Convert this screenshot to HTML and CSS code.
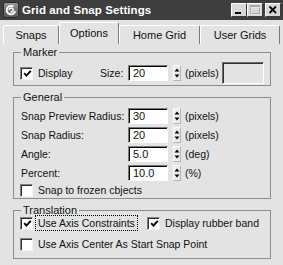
FILE: index.html
```html
<!DOCTYPE html>
<html>
<head>
<meta charset="utf-8">
<link rel="stylesheet" href="styles.css">
</head>
<body>
<div class="win">
  <div class="titlebar">
    <svg class="appicon" width="16" height="16" viewBox="0 0 16 16">
      <defs>
        <linearGradient id="ig" x1="0" y1="0" x2="0" y2="1">
          <stop offset="0" stop-color="#9a9a9a"/>
          <stop offset="1" stop-color="#555"/>
        </linearGradient>
      </defs>
      <rect x="0.5" y="0.5" width="15" height="15" rx="2" fill="url(#ig)" stroke="#2a2a2a"/>
      <path d="M10.5 4.6 A4.3 4.3 0 1 0 12.2 9.3" fill="none" stroke="#fff" stroke-width="1.8"/>
      <path d="M6.2 8.2 A2 2 0 1 1 9.6 9.4 L7.6 10.6" fill="none" stroke="#fff" stroke-width="1.5"/>
    </svg>
    <span class="title">Grid and Snap Settings</span>
    <div class="tbtns">
      <span class="tb"><svg width="14" height="12" viewBox="0 0 14 12"><rect x="3" y="8" width="6" height="2" fill="#000"/></svg></span>
      <span class="tb"><svg width="14" height="12" viewBox="0 0 14 12"><rect x="2.5" y="1.5" width="9" height="8" fill="none" stroke="#a8a8a8"/><line x1="2.5" y1="2.5" x2="11.5" y2="2.5" stroke="#a8a8a8"/><rect x="3.5" y="3.5" width="9" height="7" fill="none" stroke="#f2f2f2" stroke-width="0.6"/></svg></span>
      <span class="tb close"><svg width="14" height="12" viewBox="0 0 14 12"><path d="M3.5 2.5 L10 9 M10 2.5 L3.5 9" stroke="#000" stroke-width="1.8"/></svg></span>
    </div>
  </div>

  <div class="tabs">
    <div class="tab w-snaps">Snaps</div>
    <div class="tab sel w-options">Options</div>
    <div class="tab w-home">Home Grid</div>
    <div class="tab w-user">User Grids</div>
  </div>

  <div class="panel">
    <fieldset class="grp marker">
      <legend>Marker</legend>
      <div class="mrow">
        <label class="chk dispchk"><span class="box"><svg width="9" height="9" viewBox="0 0 9 9"><polyline points="1.2,4.2 3.4,6.6 7.8,1.8" fill="none" stroke="#000" stroke-width="1.9"/></svg></span>Display</label>
        <span class="sizelbl">Size:</span>
        <span class="num">20</span>
        <span class="spin"><svg width="8" height="16" viewBox="0 0 8 16"><polygon points="1.5,6.5 6.5,6.5 4,3.5" fill="#000"/><polygon points="1.5,9.5 6.5,9.5 4,12.5" fill="#000"/></svg></span>
        <span class="unit">(pixels)</span>
        <span class="swatch"></span>
      </div>
    </fieldset>

    <fieldset class="grp general">
      <legend>General</legend>
      <div class="frow">
        <span class="flabel">Snap Preview Radius:</span>
        <span class="num">30</span>
        <span class="spin"><svg width="8" height="16" viewBox="0 0 8 16"><polygon points="1.5,6.5 6.5,6.5 4,3.5" fill="#000"/><polygon points="1.5,9.5 6.5,9.5 4,12.5" fill="#000"/></svg></span>
        <span class="unit">(pixels)</span>
      </div>
      <div class="frow">
        <span class="flabel">Snap Radius:</span>
        <span class="num">20</span>
        <span class="spin"><svg width="8" height="16" viewBox="0 0 8 16"><polygon points="1.5,6.5 6.5,6.5 4,3.5" fill="#000"/><polygon points="1.5,9.5 6.5,9.5 4,12.5" fill="#000"/></svg></span>
        <span class="unit">(pixels)</span>
      </div>
      <div class="frow">
        <span class="flabel">Angle:</span>
        <span class="num">5.0</span>
        <span class="spin"><svg width="8" height="16" viewBox="0 0 8 16"><polygon points="1.5,6.5 6.5,6.5 4,3.5" fill="#000"/><polygon points="1.5,9.5 6.5,9.5 4,12.5" fill="#000"/></svg></span>
        <span class="unit">(deg)</span>
      </div>
      <div class="frow">
        <span class="flabel">Percent:</span>
        <span class="num">10.0</span>
        <span class="spin"><svg width="8" height="16" viewBox="0 0 8 16"><polygon points="1.5,6.5 6.5,6.5 4,3.5" fill="#000"/><polygon points="1.5,9.5 6.5,9.5 4,12.5" fill="#000"/></svg></span>
        <span class="unit">(%)</span>
      </div>
      <div class="crow">
        <label class="chk"><span class="box"></span>Snap to frozen cbjects</label>
      </div>
    </fieldset>

    <fieldset class="grp trans">
      <legend>Translation</legend>
      <div class="trow">
        <label class="chk axischk"><span class="box"><svg width="9" height="9" viewBox="0 0 9 9"><polyline points="1.2,4.2 3.4,6.6 7.8,1.8" fill="none" stroke="#000" stroke-width="1.9"/></svg></span><span class="focus">Use Axis Constraints</span></label>
        <label class="chk"><span class="box"><svg width="9" height="9" viewBox="0 0 9 9"><polyline points="1.2,4.2 3.4,6.6 7.8,1.8" fill="none" stroke="#000" stroke-width="1.9"/></svg></span>Display rubber band</label>
      </div>
      <div class="trow second">
        <label class="chk"><span class="box"></span>Use Axis Center As Start Snap Point</label>
      </div>
    </fieldset>
  </div>
</div>
</body>
</html>
```

FILE: styles.css
```css
html, body {
  margin: 0;
  padding: 0;
}
body {
  background: #e3e3e3;
  font-family: "Liberation Sans", Arial, sans-serif;
  font-size: 10.5px;
  color: #111;
}
.win {
  width: 283px;
  height: 265px;
  overflow: hidden;
}
.titlebar {
  height: 20px;
  background: #3e3e3e;
  display: flex;
  align-items: center;
  padding: 0 2px 0 3px;
  color: #fff;
}
.appicon {
  flex: none;
  margin-right: 3px;
}
.title {
  flex: 1;
  font-weight: bold;
  font-size: 11.5px;
  letter-spacing: 0.1px;
}
.tbtns {
  display: flex;
  align-items: center;
}
.tb {
  width: 16px;
  height: 14px;
  box-sizing: border-box;
  background: #d8d8d8;
  border: 1px solid;
  border-color: #fff #3a3a3a #3a3a3a #fff;
  display: flex;
  align-items: center;
  justify-content: center;
}
.tb.close {
  margin-left: 2px;
}

.tabs {
  height: 24px;
  display: flex;
  align-items: flex-end;
  padding-left: 3px;
}
.tab {
  height: 19px;
  box-sizing: border-box;
  border-top: 1px solid #fff;
  border-left: 1px solid #fff;
  border-right: 1px solid #7a7a7a;
  border-radius: 2px 2px 0 0;
  display: flex;
  align-items: center;
  justify-content: center;
  font-size: 11px;
}
.tab.sel {
  height: 22px;
  padding-bottom: 2px;
}
.w-snaps { width: 56px; }
.w-options { width: 60px; }
.w-home { width: 81px; }
.w-user { width: 80px; }

.panel {
  padding: 3px 0 0 13px;
}
.grp {
  margin: 0;
  width: 258px;
  box-sizing: border-box;
  border: 1px solid #8c8c8c;
  padding: 0 6px 0 6px;
}
.grp + .grp {
  margin-top: 6px;
}
legend {
  padding: 0 2px;
  margin-left: 1px;
  line-height: 11px;
  font-size: 11px;
}
.marker {
  padding-top: 4px;
  padding-bottom: 1px;
}
.mrow {
  display: flex;
  align-items: center;
  height: 22px;
}
.chk {
  display: flex;
  align-items: center;
  white-space: nowrap;
}
.box {
  width: 13px;
  height: 13px;
  box-sizing: border-box;
  background: #fff;
  border: 1px solid;
  border-color: #808080 #f4f4f4 #f4f4f4 #808080;
  box-shadow: inset 1px 1px 0 #303030;
  margin-right: 5px;
  display: flex;
  align-items: center;
  justify-content: center;
  flex: none;
}
.box svg {
  margin: 1px 0 0 1px;
}
.dispchk {
  width: 80px;
}
.sizelbl {
  width: 28px;
}
.num {
  width: 40px;
  height: 16px;
  box-sizing: border-box;
  background: #fff;
  border: 1px solid;
  border-color: #7a7a7a #fff #fff #7a7a7a;
  box-shadow: inset 1px 1px 0 #000;
  padding: 1px 0 0 4px;
  font-size: 11px;
  line-height: 13px;
}
.spin {
  margin-left: 5px;
  width: 8px;
  height: 16px;
  box-sizing: border-box;
  display: flex;
  background: #ececec;
  border: 1px solid;
  border-color: #fafafa #b4b4b4 #b4b4b4 #fafafa;
}
.spin svg {
  margin: -1px 0 0 -1px;
  flex: none;
}
.unit {
  margin-left: 4px;
}
.swatch {
  margin-left: auto;
  width: 42px;
  height: 22px;
  box-sizing: border-box;
  border: 1px solid;
  border-color: #6a6a6a #fff #fff #6a6a6a;
  box-shadow: inset 1px 1px 0 #303030;
  background: #e3e3e3;
}

.general {
  padding-top: 3px;
}
.frow {
  display: flex;
  align-items: center;
  height: 19px;
}
.flabel {
  width: 107px;
  padding-left: 1px;
}
.crow {
  height: 16px;
  display: flex;
  align-items: center;
}

.trans {
  padding-bottom: 7px;
}
.trow {
  height: 14px;
  display: flex;
  align-items: center;
}
.trow.second {
  margin-top: 7px;
}
.axischk {
  width: 127px;
}
.focus {
  outline: 1px dotted #000;
  outline-offset: 1px;
  padding: 0 1px;
  margin-left: -1px;
}
```
